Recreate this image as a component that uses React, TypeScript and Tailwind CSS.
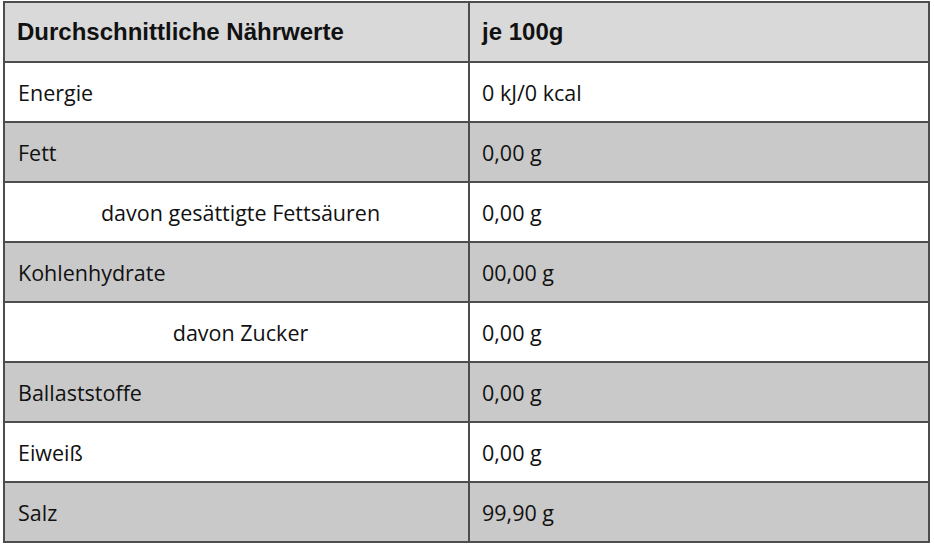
import React from "react";

const rows: { label: string; value: string; gray: boolean; indent?: boolean }[] = [
  { label: "Energie", value: "0 kJ/0 kcal", gray: false },
  { label: "Fett", value: "0,00 g", gray: true },
  { label: "davon gesättigte Fettsäuren", value: "0,00 g", gray: false, indent: true },
  { label: "Kohlenhydrate", value: "00,00 g", gray: true },
  { label: "davon Zucker", value: "0,00 g", gray: false, indent: true },
  { label: "Ballaststoffe", value: "0,00 g", gray: true },
  { label: "Eiweiß", value: "0,00 g", gray: false },
  { label: "Salz", value: "99,90 g", gray: true },
];

export default function App() {
  return (
    <div className="w-[934px] h-[548px] bg-white pt-[1px] pl-[3px]">
      <table className="border-collapse w-[927px] border-2 border-[#4d4d4d] text-[#111]">
        <thead>
          <tr className="h-[60px] bg-[#d9d9d9]">
            <th
              className="w-[465px] border-2 border-[#4d4d4d] text-left pl-[12px] font-bold text-[24px]"
              style={{ fontFamily: '"Liberation Sans", Arial, sans-serif' }}
            >
              Durchschnittliche Nährwerte
            </th>
            <th
              className="border-2 border-[#4d4d4d] text-left pl-[12px] font-bold text-[24px]"
              style={{ fontFamily: '"Liberation Sans", Arial, sans-serif' }}
            >
              je 100g
            </th>
          </tr>
        </thead>
        <tbody style={{ fontFamily: '"Open Sans", sans-serif' }} className="text-[21.5px]">
          {rows.map((r, i) => (
            <tr key={i} className={`h-[60px] ${r.gray ? "bg-[#c9c9c9]" : "bg-white"}`}>
              <td
                className={`border-2 border-[#4d4d4d] pt-[2px] ${r.indent ? "text-center pl-[8px]" : "text-left pl-[13px]"}`}
              >
                {r.label}
              </td>
              <td className="border-2 border-[#4d4d4d] pt-[2px] text-left pl-[12px]">{r.value}</td>
            </tr>
          ))}
        </tbody>
      </table>
    </div>
  );
}
